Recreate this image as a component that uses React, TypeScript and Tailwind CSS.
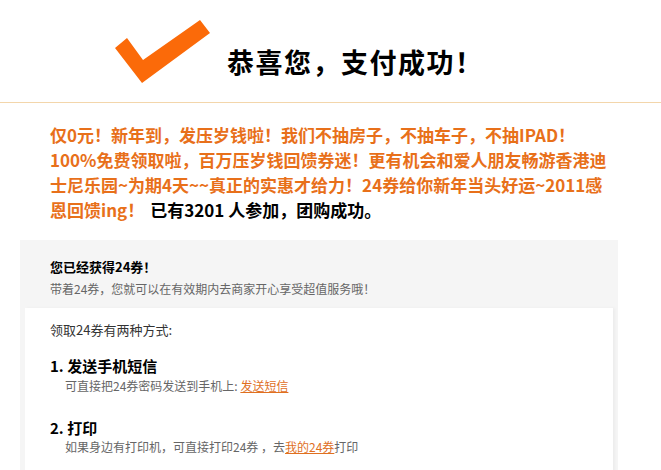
import React from "react";

const CJK = "font-['Noto_Sans_CJK_SC','Liberation_Sans',sans-serif]";

function CheckMark() {
    return (
        <svg width="96" height="64" viewBox="115 20 96 64" className="shrink-0">
            <polygon points="115,48 127,38 143,60 200,20 210,33 142,83" fill="#fb6a09" />
        </svg>
    );
}

export default function App() {
    return (
        <div className={`w-[661px] h-[470px] overflow-hidden bg-white ${CJK}`}>
            {/* 顶部：成功提示 */}
            <div className="h-[103px] border-b border-[#f3d6ab] flex items-start pl-[115px] pt-[20px]">
                <CheckMark />
                <h1 className="ml-[16px] mt-[27px] text-[27px] leading-[30px] font-bold tracking-[1.5px] text-black">
                    恭喜您，支付成功！
                </h1>
            </div>

            {/* 活动说明 */}
            <p className="mt-[19px] px-[50px] text-[17px] leading-[25px] font-bold text-[#e8701a] whitespace-nowrap">
                仅0元！新年到，发压岁钱啦！我们不抽房子，不抽车子，不抽IPAD！<br />
                100%免费领取啦，百万压岁钱回馈券迷！更有机会和爱人朋友畅游香港迪<br />
                士尼乐园~为期4天~~真正的实惠才给力！24券给你新年当头好运~2011感<br />
                恩回馈ing！
                <span className="ml-[6px] text-black">已有3201 人参加，团购成功。</span>
            </p>

            {/* 领取方式 */}
            <div className="mt-[18px] ml-[20px] w-[598px] bg-[#f5f5f5]">
                <div className="px-[30px] pt-[18px] pb-[10px]">
                    <h2 className="text-[13px] leading-[18px] font-bold text-black">您已经获得24券！</h2>
                    <p className="mt-[4px] text-[12px] leading-[18px] text-[#666]">
                        带着24券，您就可以在有效期内去商家开心享受超值服务哦！
                    </p>
                </div>
                <div className="mx-[5px] bg-white pl-[25px] pt-[12px] pb-[30px] shadow-[2px_0_3px_rgba(0,0,0,0.04)]">
                    <p className="text-[13px] leading-[20px] text-[#333]">领取24券有两种方式:</p>

                    <h3 className="mt-[16px] text-[15px] leading-[20px] font-bold text-black">1. 发送手机短信</h3>
                    <p className="pl-[15px] mt-[1px] text-[12px] leading-[18px] text-[#666]">
                        可直接把24券密码发送到手机上:{" "}
                        <a className="text-[#e0701f] underline">发送短信</a>
                    </p>

                    <h3 className="mt-[23px] text-[15px] leading-[20px] font-bold text-black">2. 打印</h3>
                    <p className="pl-[15px] text-[12px] leading-[18px] text-[#666]">
                        如果身边有打印机，可直接打印24券 ，去<a className="text-[#e0701f] underline">我的24券</a>打印
                    </p>
                </div>
            </div>
        </div>
    );
}
